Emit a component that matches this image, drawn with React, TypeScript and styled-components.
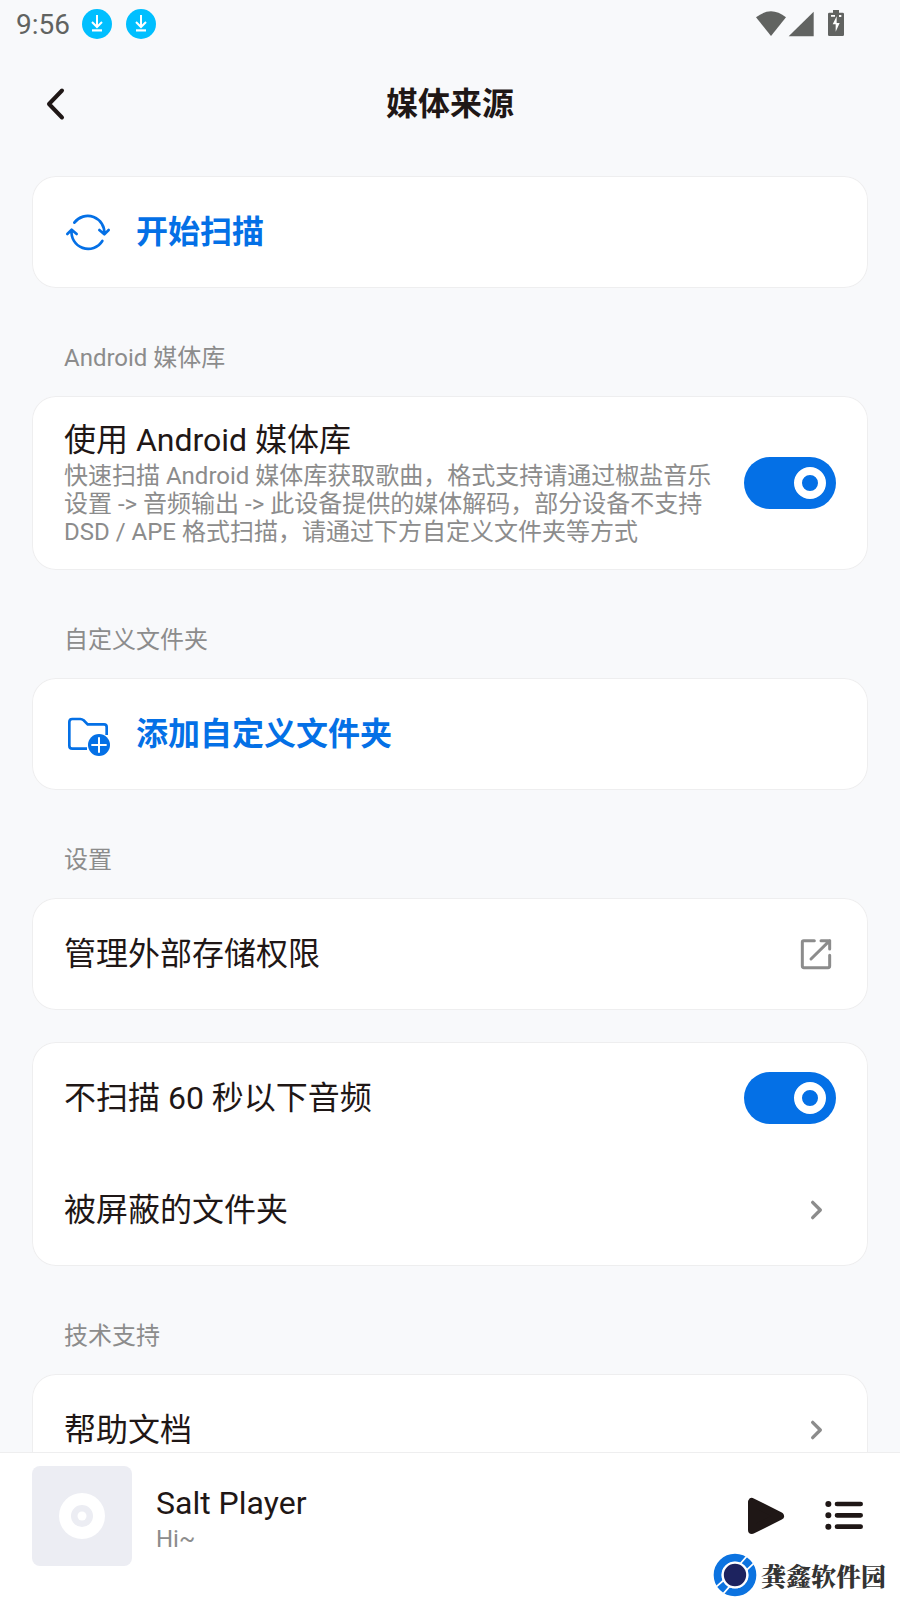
import React, { useState } from "react";
import styled, { createGlobalStyle } from "styled-components";

const GlobalStyle = createGlobalStyle`
  *, *::before { box-sizing: border-box; }
  body {
    margin: 0;
    background: #f8f9fb;
    color: #1f1716;
    font-family: Roboto, "Noto Sans CJK SC", sans-serif;
  }
  button { font: inherit; color: inherit; border: 0; background: none; padding: 0; cursor: pointer; }
  svg { display: block; flex: none; }
`;

const Screen = styled.div`
  display: flex;
  flex-direction: column;
  height: 100vh;
`;

const StatusBar = styled.div`
  display: flex;
  flex: none;
  align-items: center;
  justify-content: space-between;
  height: 48px;
  padding: 0 50px 0 16px;
  color: #616361;
  font-size: 28px;
`;

const StatusGroup = styled.div`
  display: flex;
  align-items: center;
  gap: 12px;
`;

const Header = styled.header`
  display: grid;
  flex: none;
  grid-template-columns: 48px 1fr 48px;
  align-items: center;
  height: 112px;
  padding: 0 32px;
`;

const PageTitle = styled.h1`
  margin: 0;
  font-size: 32px;
  line-height: 40px;
  font-weight: 700;
  text-align: center;
`;

const Content = styled.main`
  flex: 1;
  min-height: 0;
  overflow-y: auto;
  scrollbar-width: none;
  padding: 16px 32px 32px;
`;

const SectionLabel = styled.h2`
  margin: 0;
  padding: 54px 32px 22px;
  color: #8c8c8c;
  font-size: 24px;
  line-height: 32px;
  font-weight: 400;
`;

const Card = styled.section`
  overflow: hidden;
  border-radius: 24px;
  background: #fff;
  box-shadow: inset 0 0 0 1px #eeeeef;

  & + & { margin-top: 32px; }
`;

const Row = styled.div`
  display: flex;
  align-items: center;
  justify-content: space-between;
  gap: 24px;
  width: 100%;
  min-height: 112px;
  padding: 24px 32px;
  font-size: 32px;
  line-height: 40px;
  text-align: left;
  color: inherit;
  text-decoration: none;
`;

const ActionRow = styled(Row)`
  justify-content: flex-start;
  color: #0470e6;
  font-weight: 700;
`;

const RowText = styled.label`
  flex: 1;
  min-width: 0;
`;

const Description = styled.span`
  display: block;
  padding-top: 2px;
  color: #8c8c8c;
  font-size: 24px;
  line-height: 28px;
`;

const Toggle = styled.input`
  display: flex;
  flex: none;
  align-items: center;
  justify-content: flex-start;
  appearance: none;
  width: 92px;
  height: 52px;
  margin: 0;
  padding: 0 10px;
  border-radius: 26px;
  background: #d5d8de;
  cursor: pointer;

  &::before {
    content: "";
    width: 32px;
    height: 32px;
    border: 8px solid #fff;
    border-radius: 50%;
  }
  &:checked {
    justify-content: flex-end;
    background: #0470e6;
  }
`;

const Player = styled.footer`
  position: relative;
  display: flex;
  flex: none;
  align-items: center;
  gap: 24px;
  height: 148px;
  padding: 0 32px 20px;
  background: #fff;
  box-shadow: inset 0 1px 0 #eeeeef;
`;

const Track = styled.div`
  flex: 1;
  min-width: 0;
  padding-top: 6px;
`;

const TrackTitle = styled.div`
  font-size: 32px;
  line-height: 40px;
`;

const TrackArtist = styled.div`
  color: #8c8c8c;
  font-size: 24px;
  line-height: 32px;
`;

const Controls = styled.div`
  display: flex;
  gap: 30px;
`;

const SiteBadge = styled.div`
  position: absolute;
  right: 14px;
  bottom: 3px;
  display: flex;
  align-items: center;
  gap: 4px;
  color: #333;
  font-family: "Noto Serif CJK SC", "Noto Sans CJK SC", serif;
  font-size: 25px;
  line-height: 44px;
  font-weight: 900;
`;

const DownloadIcon = () => (
  <svg width="32" height="30" viewBox="0 0 32 30" fill="none" aria-hidden="true">
    <circle cx="15" cy="15" r="15" fill="#00bfff" />
    <path d="M15 6v12M10 13l5 5 5-5" stroke="#fff" strokeWidth="2" />
    <path d="M10 21.4h10" stroke="#fff" strokeWidth="2.2" />
  </svg>
);

const StatusIcons = () => (
  <svg width="100" height="32" viewBox="0 0 300 96" fill="#616361" aria-hidden="true">
    <path d="M18 28Q63-8 108 28L63 84Z" />
    <path d="M116 85L191 11V85Z" />
    <path d="M249 6h18v8h11q4 0 4 4v62q0 4-4 4h-40q-4 0-4-4V18q0-4 4-4h11z" />
    <path d="M243 21h12v5h-12zM267 21h7v6h-7zM260 25l-12 24h9v22l12-26h-9z" fill="#fff" />
  </svg>
);

const BackIcon = () => (
  <svg width="48" height="48" viewBox="0 0 48 48" fill="none" stroke="currentColor" strokeWidth="4" strokeLinecap="round" strokeLinejoin="round" aria-hidden="true">
    <path d="M30 10.5L17 24l13 13.5" />
  </svg>
);

const ScanIcon = () => (
  <svg width="48" height="48" viewBox="0 0 144 144" fill="none" stroke="currentColor" strokeWidth="8" strokeLinecap="round" strokeLinejoin="round" aria-hidden="true">
    <path d="M31 44A50 50 0 0 1 121 78M106 66l15 13 13-13" />
    <path d="M115 99A50 50 0 0 1 23 66M10 78l13-13 15 13" />
  </svg>
);

const FolderAddIcon = () => (
  <svg width="48" height="48" viewBox="0 0 144 144" fill="none" stroke="currentColor" strokeWidth="8" aria-hidden="true">
    <path d="M128 75V51q0-8-8-8H71L59 31q-5-4-10-4H25q-9 0-9 9v71q0 9 9 9h44" />
    <circle cx="105" cy="105" r="33" fill="currentColor" stroke="none" />
    <path d="M105 82v46M82 105h46" stroke="#fff" strokeWidth="6" />
  </svg>
);

const OpenIcon = () => (
  <svg width="40" height="40" viewBox="0 0 120 120" fill="none" stroke="#8c8c8c" strokeWidth="9" strokeLinecap="round" strokeLinejoin="round" aria-hidden="true">
    <path d="M55 20H23q-4 0-4 4v72q0 5 5 5h72q5 0 5-5V64" />
    <path d="M75 20h26v25M101 20L45 75" />
  </svg>
);

const ChevronIcon = () => (
  <svg width="40" height="40" viewBox="0 0 120 120" fill="none" stroke="#8c8c8c" strokeWidth="10" strokeLinecap="round" strokeLinejoin="round" aria-hidden="true">
    <path d="M50 37l23 23-23 23" />
  </svg>
);

const CoverArt = () => (
  <svg width="100" height="100" viewBox="0 0 100 100" aria-hidden="true">
    <rect width="100" height="100" rx="8" fill="#ecedf3" />
    <circle cx="50" cy="50" r="17" fill="none" stroke="#fff" strokeWidth="12" />
    <circle cx="50" cy="50" r="4.5" fill="#fff" />
  </svg>
);

const PlayIcon = () => (
  <svg width="48" height="48" viewBox="0 0 144 144" fill="currentColor" stroke="currentColor" strokeWidth="24" strokeLinejoin="round" aria-hidden="true">
    <path d="M30 30v84l84-42z" />
  </svg>
);

const QueueIcon = () => (
  <svg width="48" height="48" viewBox="0 0 144 144" stroke="currentColor" strokeLinecap="round" aria-hidden="true">
    <path d="M25 36h.1M25 70h.1M25 104h.1" strokeWidth="18" />
    <path d="M51 36h71M51 70h71M51 104h71" strokeWidth="14" />
  </svg>
);

const SiteLogo = () => (
  <svg width="44" height="44" viewBox="0 0 132 132" fill="none" aria-hidden="true">
    <circle cx="66" cy="66" r="52" stroke="#0c73e0" strokeWidth="24" />
    <path d="M101 10L81 33M122 31L100 52M10 101L33 81M31 122L52 98" stroke="#fff" strokeWidth="5" />
    <circle cx="66" cy="66" r="37" fill="#1d235f" stroke="#fff" strokeWidth="7" />
  </svg>
);

export default function App() {
  const [useLibrary, setUseLibrary] = useState(true);
  const [skipShort, setSkipShort] = useState(true);

  return (
    <Screen>
      <GlobalStyle />
      <StatusBar>
        <StatusGroup>
          <span>9:56</span>
          <DownloadIcon />
          <DownloadIcon />
        </StatusGroup>
        <StatusIcons />
      </StatusBar>
      <Header>
        <button aria-label="返回"><BackIcon /></button>
        <PageTitle>媒体来源</PageTitle>
      </Header>
      <Content>
        <Card>
          <ActionRow as="button"><ScanIcon />开始扫描</ActionRow>
        </Card>

        <SectionLabel>Android 媒体库</SectionLabel>
        <Card>
          <Row>
            <RowText htmlFor="use-library">
              使用 Android 媒体库
              <Description>
                快速扫描 Android 媒体库获取歌曲，格式支持请通过椒盐音乐设置 -&gt; 音频输出 -&gt; 此设备提供的媒体解码，部分设备不支持 DSD / APE 格式扫描，请通过下方自定义文件夹等方式
              </Description>
            </RowText>
            <Toggle id="use-library" type="checkbox" checked={useLibrary} onChange={(e) => setUseLibrary(e.target.checked)} />
          </Row>
        </Card>

        <SectionLabel>自定义文件夹</SectionLabel>
        <Card>
          <ActionRow as="button"><FolderAddIcon />添加自定义文件夹</ActionRow>
        </Card>

        <SectionLabel>设置</SectionLabel>
        <Card>
          <Row as="button">管理外部存储权限<OpenIcon /></Row>
        </Card>
        <Card>
          <Row>
            <RowText htmlFor="skip-short">不扫描 60 秒以下音频</RowText>
            <Toggle id="skip-short" type="checkbox" checked={skipShort} onChange={(e) => setSkipShort(e.target.checked)} />
          </Row>
          <Row as="button">被屏蔽的文件夹<ChevronIcon /></Row>
        </Card>

        <SectionLabel>技术支持</SectionLabel>
        <Card>
          <Row as="a" href="#help">帮助文档<ChevronIcon /></Row>
        </Card>
      </Content>
      <Player>
        <CoverArt />
        <Track>
          <TrackTitle>Salt Player</TrackTitle>
          <TrackArtist>Hi~</TrackArtist>
        </Track>
        <Controls>
          <button aria-label="播放"><PlayIcon /></button>
          <button aria-label="播放列表"><QueueIcon /></button>
        </Controls>
        <SiteBadge><SiteLogo />龚鑫软件园</SiteBadge>
      </Player>
    </Screen>
  );
}
